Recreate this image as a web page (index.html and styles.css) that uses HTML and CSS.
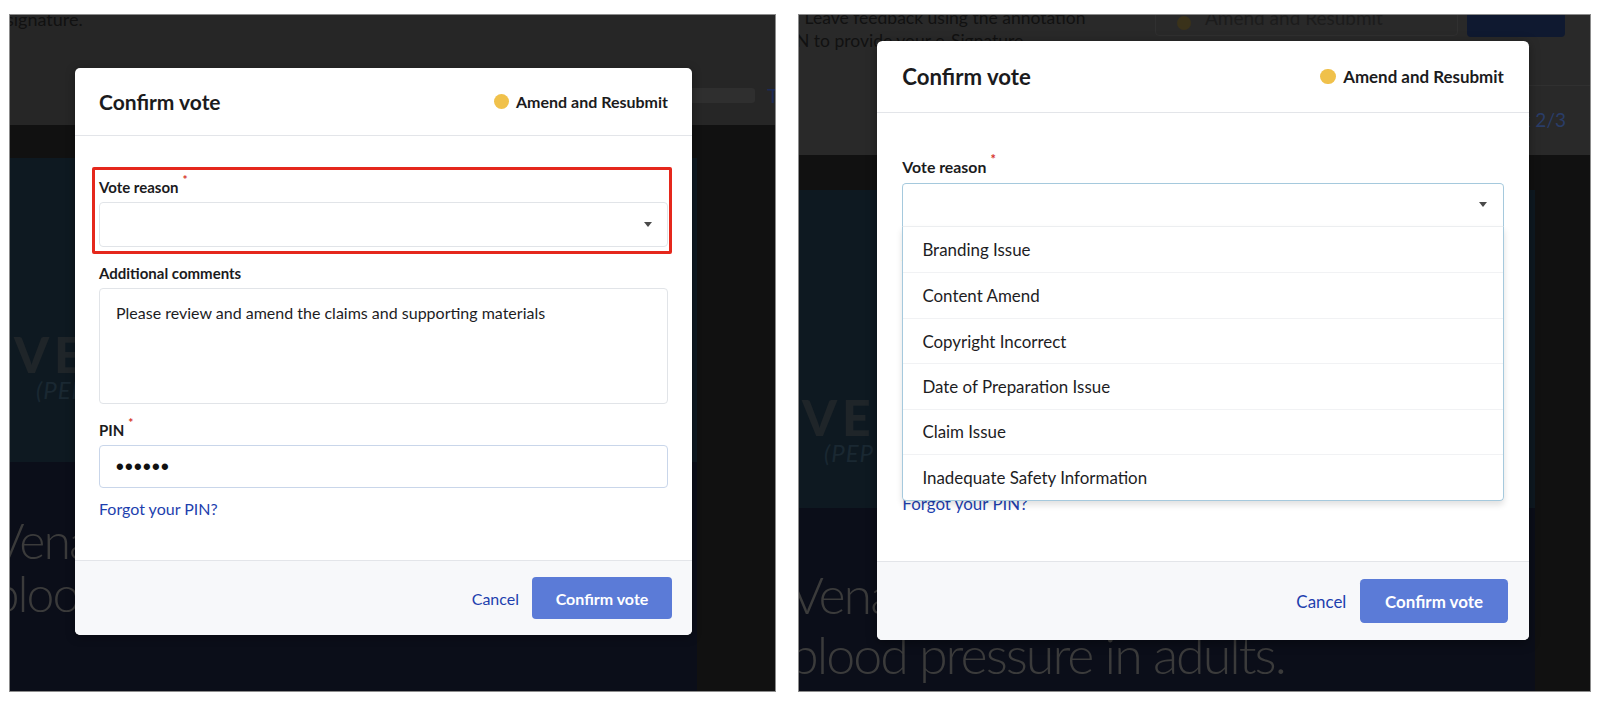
FILE: index.html
```html
<!DOCTYPE html>
<html lang="en">
<head>
<meta charset="utf-8">
<title>Confirm vote</title>
<link rel="stylesheet" href="styles.css">
</head>
<body>
<div class="page">

  <section class="panel panel-left">
    <div class="strip strip-left">
      <p class="strip-text strip-text-left">signature.</p>
      <div class="strip-row">
        <div class="strip-bar"></div>
        <span class="strip-link">T</span>
      </div>
    </div>
    <div class="bg-body">
      <div class="bg-main bg-main-left">
        <div class="hero hero-left">
          <div class="logo">VEN</div>
          <div class="logo-sub">(PEP</div>
        </div>
        <div class="headline headline-left">
          <p class="headline-text">Vena<br>blood</p>
        </div>
      </div>
      <div class="bg-side"></div>
    </div>

    <div class="modal-wrap modal-wrap-left">
      <div class="modal">
        <header class="modal-head">
          <h2 class="modal-title">Confirm vote</h2>
          <div class="badge"><span class="badge-dot"></span><span class="badge-text">Amend and Resubmit</span></div>
        </header>
        <div class="modal-body">
          <div class="field annotated">
            <label class="field-label">Vote reason<span class="req">*</span></label>
            <div class="select"><span class="caret"></span></div>
          </div>
          <div class="field">
            <label class="field-label">Additional comments</label>
            <div class="textarea">Please review and amend the claims and supporting materials</div>
          </div>
          <div class="field">
            <label class="field-label">PIN<span class="req">*</span></label>
            <div class="input input-pin"><span class="pin-dots">••••••</span></div>
          </div>
          <a class="link forgot">Forgot your PIN?</a>
        </div>
        <footer class="modal-foot">
          <a class="link cancel">Cancel</a>
          <button class="btn-primary">Confirm vote</button>
        </footer>
      </div>
    </div>
  </section>

  <section class="panel panel-right">
    <div class="strip strip-right">
      <div class="strip-top">
        <p class="strip-text strip-text-right">. Leave feedback using the annotation<br>N to provide your e-Signature</p>
        <div class="ghost-box"><span class="ghost-dot"></span><span class="ghost-text">Amend and Resubmit</span></div>
        <div class="ghost-btn"></div>
      </div>
      <div class="strip-line"></div>
      <div class="strip-task"><span>Task 2/3</span></div>
    </div>
    <div class="bg-body">
      <div class="bg-main bg-main-right">
        <div class="hero hero-right">
          <div class="logo">VEN</div>
          <div class="logo-sub">(PEP</div>
        </div>
        <div class="headline headline-right">
          <p class="headline-text">Vena<br>blood pressure in adults.</p>
        </div>
      </div>
      <div class="bg-side"></div>
    </div>

    <div class="modal-wrap modal-wrap-right">
      <div class="modal modal-lg">
        <header class="modal-head">
          <h2 class="modal-title">Confirm vote</h2>
          <div class="badge"><span class="badge-dot"></span><span class="badge-text">Amend and Resubmit</span></div>
        </header>
        <div class="modal-body">
          <div class="field">
            <label class="field-label">Vote reason<span class="req">*</span></label>
            <div class="select-wrap">
              <div class="select select-open"><span class="caret"></span></div>
              <ul class="dropdown">
                <li class="option">Branding Issue</li>
                <li class="option">Content Amend</li>
                <li class="option">Copyright Incorrect</li>
                <li class="option">Date of Preparation Issue</li>
                <li class="option">Claim Issue</li>
                <li class="option">Inadequate Safety Information</li>
              </ul>
            </div>
          </div>
          <div class="field">
            <label class="field-label">Additional comments</label>
            <div class="textarea">Please review and amend the claims and supporting materials</div>
          </div>
          <div class="field">
            <label class="field-label">PIN<span class="req">*</span></label>
            <div class="input input-pin"><span class="pin-dots">••••••</span></div>
          </div>
          <a class="link forgot">Forgot your PIN?</a>
        </div>
        <footer class="modal-foot">
          <a class="link cancel">Cancel</a>
          <button class="btn-primary">Confirm vote</button>
        </footer>
      </div>
    </div>
  </section>

</div>
</body>
</html>
```

FILE: styles.css
```css
* { box-sizing: border-box; }

html, body {
  margin: 0;
  padding: 0;
  background: #ffffff;
  font-family: "Lato", "Liberation Sans", sans-serif;
  color: #1d1d1f;
}

.page {
  width: 1600px;
  height: 702px;
  display: flex;
  align-items: flex-start;
  padding: 14px 0 0 9px;
  gap: 22px;
}

.panel {
  position: relative;
  overflow: hidden;
  height: 678px;
  border: 1px solid #8c8c8c;
  display: flex;
  flex-direction: column;
  background: #111111;
}
.panel-left { width: 767px; }
.panel-right { width: 793px; }

/* ---------- dimmed page behind the modals ---------- */
.strip {
  background: #262626;
  flex: none;
}
.strip-left { height: 110px; }
.strip-right { height: 140px; background: #292929; }

.strip-text {
  margin: 0;
  color: #111111;
  font-size: 18px;
  line-height: 23px;
}
.strip-text-left {
  margin-top: -7px;
  margin-left: -4px;
}
.strip-row {
  display: flex;
  align-items: center;
  margin-top: 55px;
  justify-content: flex-end;
  gap: 12px;
}
.strip-bar {
  width: 480px;
  height: 15px;
  border-radius: 3px;
  background: #2f2f2f;
}
.strip-link {
  color: #1c2a55;
  font-size: 20px;
  line-height: 18px;
  width: 8px;
  overflow: hidden;
}

.strip-top {
  display: flex;
  align-items: flex-start;
  height: 52px;
}
.strip-text-right {
  margin-top: -9px;
  margin-left: -3px;
  width: 340px;
  font-size: 17.5px;
}
.ghost-box {
  margin-left: 19px;
  margin-top: -6px;
  width: 303px;
  height: 27px;
  border: 1px solid #303030;
  border-radius: 4px;
  display: flex;
  align-items: center;
  gap: 14px;
  padding-left: 21px;
}
.ghost-dot {
  width: 14px;
  height: 14px;
  border-radius: 50%;
  background: #3a321a;
}
.ghost-text {
  color: #1c1c1c;
  font-size: 19px;
  line-height: 18px;
  margin-top: -10px;
}
.ghost-btn {
  margin-left: 9px;
  margin-top: -6px;
  width: 98px;
  height: 28px;
  border-radius: 4px;
  background: #0f1930;
}
.strip-line {
  height: 1px;
  background: #303030;
  margin-left: 200px;
  margin-top: 18px;
}
.strip-task {
  display: flex;
  justify-content: flex-end;
  padding-right: 24px;
  margin-top: 22px;
  color: #2a3d68;
  font-size: 19px;
  line-height: 24px;
}

.bg-body {
  flex: 1;
  display: flex;
  background: #111111;
}
.bg-main {
  display: flex;
  flex-direction: column;
}
.bg-main-left { width: 687px; padding-top: 33px; }
.bg-main-right { width: 736px; padding-top: 35px; }
.bg-side { flex: 1; }

.hero {
  background: #0e1921;
  overflow: hidden;
}
.hero-left { height: 304px; padding: 173px 0 0 4px; }
.hero-right { height: 318px; padding: 204px 0 0 3px; }

.logo {
  color: #1f2529;
  font-weight: 900;
  font-size: 50px;
  line-height: 46px;
  letter-spacing: 5px;
}
.logo-sub {
  color: #1a2832;
  font-style: italic;
  font-size: 24px;
  line-height: 26px;
  margin-left: 22px;
  letter-spacing: 1px;
}

.headline {
  flex: 1;
  background: #0b0e19;
  overflow: hidden;
}
.headline-text {
  margin: 0;
  color: #3b3b3b;
  font-weight: 300;
  letter-spacing: -2px;
  white-space: nowrap;
}
.headline-left .headline-text {
  font-size: 50px;
  line-height: 53px;
  padding-top: 52px;
  margin-left: -18px;
}
.headline-right .headline-text {
  font-size: 52px;
  line-height: 60px;
  padding-top: 56px;
  margin-left: -9px;
}

/* ---------- modal ---------- */
.modal-wrap {
  position: absolute;
}
.modal-wrap-left { left: 65px; top: 53px; }
.modal-wrap-right { left: 78px; top: 26px; }

.modal {
  width: 617px;
  height: 567px;
  background: #ffffff;
  border-radius: 5px;
  display: flex;
  flex-direction: column;
  overflow: hidden;
  box-shadow: 0 2px 10px rgba(0, 0, 0, 0.35);
}
.modal-lg { zoom: 1.057; overflow: visible; }

.modal-head {
  height: 68px;
  flex: none;
  border-bottom: 1px solid #e3e5e9;
  display: flex;
  align-items: center;
  justify-content: space-between;
  padding: 0 24px;
}
.modal-title {
  margin: 0;
  font-size: 21px;
  font-weight: 700;
  color: #1b1b1d;
}
.badge {
  display: flex;
  align-items: center;
  gap: 7px;
}
.badge-dot {
  width: 15px;
  height: 15px;
  border-radius: 50%;
  background: #f0c14b;
}
.badge-text {
  font-size: 16px;
  font-weight: 700;
  color: #1b1b1d;
}

.modal-body {
  flex: 1;
  padding: 41px 24px 0;
  display: flex;
  flex-direction: column;
  align-items: stretch;
}

.field {
  position: relative;
  margin-bottom: 16px;
}
.field-label {
  display: block;
  font-size: 15px;
  font-weight: 700;
  line-height: 20px;
  margin-bottom: 5px;
  color: #1b1b1d;
}
.req {
  color: #d6312a;
  font-size: 12px;
  vertical-align: top;
  margin-left: 4px;
  line-height: 12px;
  position: relative;
  top: -3px;
}

.annotated::after {
  content: "";
  position: absolute;
  left: -7px;
  right: -4px;
  top: -10px;
  bottom: -7px;
  border: 3px solid #e5281c;
  border-radius: 2px;
}

.select {
  height: 45px;
  border: 1px solid #e1e4e8;
  border-radius: 4px;
  display: flex;
  align-items: center;
  justify-content: flex-end;
  padding-right: 15px;
  background: #ffffff;
}
.caret {
  width: 0;
  height: 0;
  border-left: 4px solid transparent;
  border-right: 4px solid transparent;
  border-top: 5px solid #4a4a4a;
}

.select-wrap { position: relative; }
.select-open {
  border-color: #a5c9dd;
  border-bottom-color: #f0f2f4;
  border-radius: 4px 4px 0 0;
  height: 42px;
}
.dropdown {
  position: absolute;
  left: 0;
  right: 0;
  top: 100%;
  margin: 0;
  padding: 0;
  list-style: none;
  background: #ffffff;
  border: 1px solid #a5c9dd;
  border-top: none;
  border-radius: 0 0 4px 4px;
  box-shadow: 0 3px 6px rgba(0, 0, 0, 0.12);
  z-index: 2;
}
.option {
  height: 43px;
  display: flex;
  align-items: center;
  padding-left: 18px;
  font-size: 16px;
  color: #1d1d1f;
  border-top: 1px solid #f1f2f4;
}
.option:first-child { border-top: none; }

.textarea {
  height: 116px;
  border: 1px solid #e1e4e8;
  border-radius: 4px;
  padding: 13px 16px;
  font-size: 16px;
  line-height: 22px;
  color: #1d1d1f;
}
.input {
  height: 43px;
  border: 1px solid #c9d6ea;
  border-radius: 4px;
  display: flex;
  align-items: center;
  padding-left: 16px;
}
.pin-dots {
  font-size: 22px;
  letter-spacing: 1.3px;
  color: #111111;
  font-family: "Liberation Sans", sans-serif;
  font-weight: 700;
}

.link {
  color: #1e3fae;
  font-size: 16px;
  cursor: pointer;
}
.forgot {
  margin-top: -5px;
  line-height: 20px;
  align-self: flex-start;
}

.modal-foot {
  height: 75px;
  flex: none;
  background: #f7f8fa;
  border-top: 1px solid #e3e5e9;
  display: flex;
  align-items: center;
  justify-content: flex-end;
  gap: 13px;
  padding-right: 20px;
  border-radius: 0 0 5px 5px;
}
.btn-primary {
  width: 140px;
  height: 42px;
  border: none;
  border-radius: 4px;
  background: #5b7bd7;
  color: #ffffff;
  font-family: "Lato", "Liberation Sans", sans-serif;
  font-size: 16px;
  font-weight: 700;
}
```
